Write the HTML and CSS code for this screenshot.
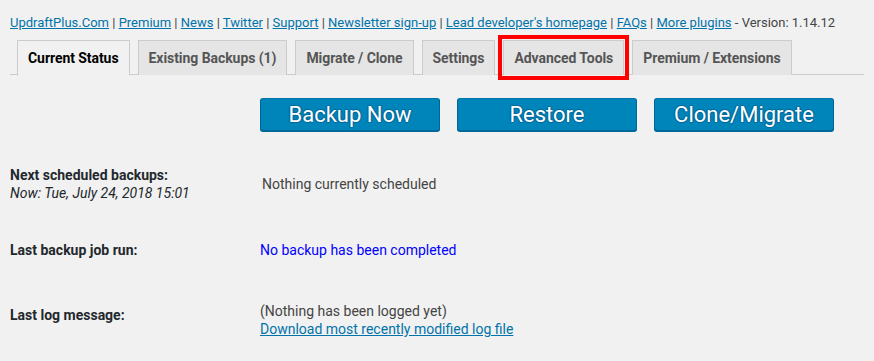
FILE: index.html
```html
<!DOCTYPE html>
<html>
<head>
<meta charset="utf-8">
<link rel="stylesheet" href="styles.css">
</head>
<body>
<div class="wrap">
  <p class="toplinks"><a href="#">UpdraftPlus.Com</a> | <a href="#">Premium</a> | <a href="#">News</a> | <a href="#">Twitter</a> | <a href="#">Support</a> | <a href="#">Newsletter sign-up</a> | <a href="#">Lead developer's homepage</a> | <a href="#">FAQs</a> | <a href="#">More plugins</a> - Version: 1.14.12</p>
  <nav class="tabs">
    <a class="tab active" href="#">Current Status</a>
    <a class="tab" href="#">Existing Backups (1)</a>
    <a class="tab" href="#">Migrate / Clone</a>
    <a class="tab" href="#">Settings</a>
    <a class="tab highlighted" href="#">Advanced Tools</a>
    <a class="tab" href="#">Premium / Extensions</a>
  </nav>
  <div class="actions">
    <button class="btn">Backup Now</button>
    <button class="btn">Restore</button>
    <button class="btn">Clone/Migrate</button>
  </div>
  <div class="rows">
    <div class="row row-next">
      <div class="label"><strong>Next scheduled backups:</strong><em>Now: Tue, July 24, 2018 15:01</em></div>
      <div class="value v1">Nothing currently scheduled</div>
    </div>
    <div class="row row-last">
      <div class="label"><strong>Last backup job run:</strong></div>
      <div class="value v2">No backup has been completed</div>
    </div>
    <div class="row row-log">
      <div class="label"><strong>Last log message:</strong></div>
      <div class="value v3"><span>(Nothing has been logged yet)</span><a href="#">Download most recently modified log file</a></div>
    </div>
  </div>
</div>
</body>
</html>
```
FILE: styles.css
```css
* { box-sizing: border-box; }
html, body { margin: 0; padding: 0; }
body {
  background: #f1f1f1;
  font-family: Roboto, "Liberation Sans", sans-serif;
  font-size: 14px;
  color: #444;
}
.wrap { padding: 0 10px; }
.toplinks {
  margin: 0;
  padding-top: 14px;
  font-size: 13px;
  line-height: 18px;
  color: #444;
}
.toplinks a { color: #0073aa; text-decoration: underline; }
.tabs {
  display: flex;
  margin-top: 8px;
  border-bottom: 1px solid #ccc;
  height: 35px;
}
.tab {
  display: block;
  margin-left: 8px;
  padding: 5px 10px;
  height: 35px;
  font-size: 14px;
  line-height: 24px;
  font-weight: 700;
  letter-spacing: -0.06px;
  color: #555;
  text-decoration: none;
  background: #e5e5e5;
  border: 1px solid #ccc;
  border-bottom: none;
}
.tab:first-child { margin-left: 7px; }
.tab.active {
  background: #f1f1f1;
  color: #000;
  height: 36px;
  border-bottom: 1px solid #f1f1f1;
}
.tab.highlighted {
  outline: 4px solid #ff0000;
  outline-offset: 1px;
}
.actions {
  display: flex;
  gap: 17px;
  margin-top: 23px;
  padding-left: 250px;
}
.btn {
  width: 180px;
  height: 33px;
  padding: 0;
  font-family: Roboto, "Liberation Sans", sans-serif;
  font-size: 22px;
  line-height: 30px;
  color: #fff;
  background: #0085ba;
  border: 1px solid #0073aa;
  border-color: #0073aa #006799 #006799;
  border-radius: 3px;
  box-shadow: 0 1px 0 #006799;
  text-shadow: 0 -1px 1px #006799, 1px 0 1px #006799, 0 1px 1px #006799, -1px 0 1px #006799;
}
.rows { display: flex; flex-direction: column; }
.row { display: flex; align-items: center; }
.label {
  width: 242px;
  flex: none;
  display: flex;
  flex-direction: column;
  line-height: 18px;
  color: #23282d;
}
.label strong { font-weight: 700; }
.label em { font-style: italic; }
.value { line-height: 18px; }
.row-next { margin-top: 35px; }
.v1 { padding-left: 10px; }
.row-last { margin-top: 39px; }
.v2 { padding-left: 8px; color: #0000ff; }
.row-log { margin-top: 43px; align-items: flex-start; }
.row-log .label { padding-top: 4px; }
.v3 { display: flex; flex-direction: column; padding-left: 8px; }
.v3 a { color: #0073aa; text-decoration: underline; }
```
